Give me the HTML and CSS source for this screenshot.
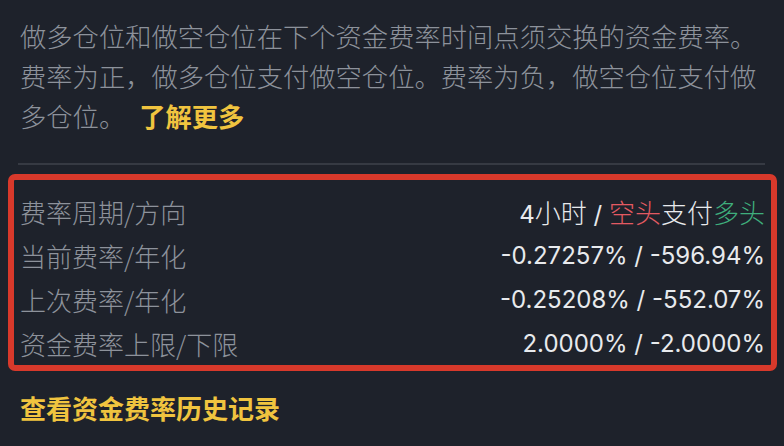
FILE: index.html
```html
<!DOCTYPE html>
<html lang="zh-CN">
<head>
<meta charset="utf-8">
<link rel="stylesheet" href="styles.css">
</head>
<body>
<div class="panel">
  <p class="intro">做多仓位和做空仓位在下个资金费率时间点须交换的资金费率。费率为正，做多仓位支付做空仓位。费率为负，做空仓位支付做多仓位。<a class="more">了解更多</a></p>
  <div class="divider"></div>
  <div class="box">
    <div class="row"><span class="label">费率周期/方向</span><span class="value">4<span class="cjk">小时</span> / <span class="cjk short">空头</span><span class="cjk">支付</span><span class="cjk long">多头</span></span></div>
    <div class="row"><span class="label">当前费率/年化</span><span class="value">-0.27257% / -596.94%</span></div>
    <div class="row"><span class="label">上次费率/年化</span><span class="value">-0.25208% / -552.07%</span></div>
    <div class="row"><span class="label">资金费率上限/下限</span><span class="value">2.0000% / -2.0000%</span></div>
  </div>
  <a class="history">查看资金费率历史记录</a>
</div>
</body>
</html>
```
FILE: styles.css
```css
html, body {
  margin: 0;
  padding: 0;
  background: #1e222b;
}
body {
  font-family: "Noto Sans CJK SC", "Noto Sans", sans-serif;
  width: 784px;
  height: 446px;
  overflow: hidden;
}
.panel {
  padding: 16px 7px 0 8px;
}
.intro {
  margin: 0;
  padding: 0 4px 0 12px;
  font-size: 26.3px;
  line-height: 40px;
  color: #8d929b;
  font-weight: 300;
}
.more {
  margin-left: 14px;
  color: #f0c43f;
  font-weight: 700;
}
.divider {
  height: 2px;
  margin: 27px 12px 9px 10px;
  background: #363a43;
}
.box {
  border: 6px solid #d8392b;
  border-radius: 7px;
  padding: 9px 6px 0;
}
.row {
  height: 44px;
  display: flex;
  align-items: center;
  justify-content: space-between;
}
.label {
  color: #8d929b;
  font-size: 26px;
  font-weight: 300;
}
.value {
  color: #e8eaed;
  font-family: Inter, "Noto Sans CJK SC", sans-serif;
  font-size: 24px;
}
.cjk {
  font-family: "Noto Sans CJK SC", sans-serif;
  font-size: 26px;
  font-weight: 300;
}
.short { color: #e35a62; }
.long { color: #3fae7c; }
.history {
  display: block;
  margin: 17px 0 0 12px;
  font-size: 26px;
  line-height: 40px;
  color: #f0c43f;
  font-weight: 700;
}
```
